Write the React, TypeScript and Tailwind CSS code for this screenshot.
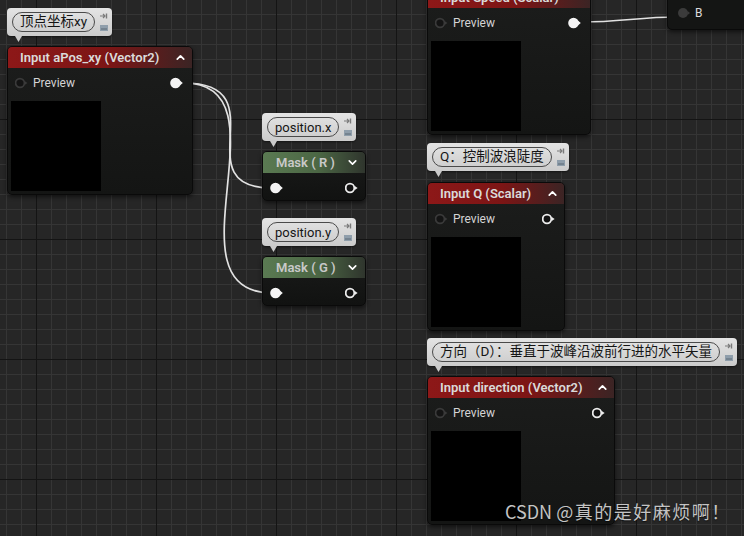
import { ChevronUp, ChevronDown } from "lucide-react";

type PinKind = "dim" | "solid" | "ring" | "gray";

const font = "font-['Roboto','Noto_Sans_CJK_SC',sans-serif]";

function Pin({ kind }: { kind: PinKind }) {
  if (kind === "solid")
    return (
      <svg width="13" height="12" viewBox="0 0 13 12">
        <circle cx="5.5" cy="6" r="5.3" fill="#f4f4f4" />
        <path d="M9.8 3.5 L12.8 6 L9.8 8.5 Z" fill="#f4f4f4" />
      </svg>
    );
  if (kind === "ring")
    return (
      <svg width="13" height="12" viewBox="0 0 13 12">
        <circle cx="5" cy="6" r="4.3" fill="#121212" stroke="#ededed" strokeWidth="1.8" />
        <path d="M9.8 4 L12.6 6 L9.8 8 Z" fill="#ededed" />
      </svg>
    );
  if (kind === "gray")
    return (
      <svg width="13" height="12" viewBox="0 0 13 12">
        <circle cx="5" cy="6" r="5" fill="#3b3b3b" />
        <path d="M9.5 4 L12 6 L9.5 8 Z" fill="#3b3b3b" />
      </svg>
    );
  return (
    <svg width="13" height="12" viewBox="0 0 13 12">
      <circle cx="5" cy="6" r="4.4" fill="#141414" stroke="#3a3a3a" strokeWidth="1.7" />
      <path d="M10 4.3 L12.3 6 L10 7.7 Z" fill="#3a3a3a" />
    </svg>
  );
}

function ParamNode({ pos, title, out }: { pos: string; title: string; out: PinKind }) {
  return (
    <div
      className={`absolute ${pos} h-[149px] flex flex-col rounded-[5px] border border-[#0a0a0a] bg-[linear-gradient(to_bottom,#1c1d1c,#141514)] shadow-[0_2px_4px_rgba(0,0,0,0.55)] overflow-hidden`}
    >
      <div className="h-[21px] shrink-0 flex items-center justify-between pl-[12px] pr-[5px] bg-[linear-gradient(to_right,#8d1818_0%,#7c1515_55%,#3b2424_100%)] text-[13px] font-semibold text-[#dadada]">
        <span>{title}</span>
        <ChevronUp size={13} strokeWidth={3.2} className="text-white" />
      </div>
      <div className="h-[30px] shrink-0 flex items-center justify-between pl-[7px] pr-[9px]">
        <div className="flex items-center gap-[5px]">
          <Pin kind="dim" />
          <span className="text-[12px] text-[#d4d4d4]">Preview</span>
        </div>
        <Pin kind={out} />
      </div>
      <div className="ml-[3px] mt-[3px] w-[90px] h-[90px] bg-black" />
    </div>
  );
}

function MaskNode({ pos, title }: { pos: string; title: string }) {
  return (
    <div
      className={`absolute ${pos} w-[104px] h-[50px] flex flex-col rounded-[5px] border border-[#0a0a0a] bg-[linear-gradient(to_bottom,#1a1b1a,#111211)] shadow-[0_2px_4px_rgba(0,0,0,0.55)] overflow-hidden`}
    >
      <div className="h-[21px] shrink-0 flex items-center justify-between pl-[13px] pr-[6px] bg-[linear-gradient(to_right,#5a7a52_0%,#4b6644_55%,#2f352d_100%)] text-[13px] font-semibold text-[#c9c9c9]">
        <span>{title}</span>
        <ChevronDown size={13} strokeWidth={3} className="text-white" />
      </div>
      <div className="flex-1 flex items-center justify-between pl-[7px] pr-[7px] pt-[2px]">
        <Pin kind="solid" />
        <Pin kind="ring" />
      </div>
    </div>
  );
}

function Comment({ pos, text, size = "text-[13.5px]" }: { pos: string; text: string; size?: string }) {
  return (
    <div
      className={`absolute ${pos} h-[28px] flex items-center pl-[5px] pr-[4px] gap-[5px] rounded-[4px] bg-[linear-gradient(to_bottom,#e4e4e4,#cbcbcb)] shadow-[0_1px_2px_rgba(0,0,0,0.5)]`}
    >
      <div className={`h-[20px] flex items-center rounded-full border border-[#4a4a4a] px-[7px] ${size} leading-none text-[#151515]`}>
        {text}
      </div>
      <div className="flex flex-col items-center gap-[6px]">
        <svg width="8" height="6" viewBox="0 0 8 6">
          <path d="M0 3 H5 M3 1 L5 3 L3 5" stroke="#7a7a7a" strokeWidth="1.2" fill="none" />
          <path d="M6.5 0.5 V5.5" stroke="#7a7a7a" strokeWidth="1.4" />
        </svg>
        <svg width="8" height="6" viewBox="0 0 8 6">
          <rect x="0" y="0" width="8" height="6" fill="#8f9eab" />
          <path d="M1 4 H7" stroke="#5b6974" strokeWidth="1" />
        </svg>
      </div>
      <svg className="absolute left-[8px] top-full" width="7" height="6" viewBox="0 0 7 6">
        <path d="M0 0 H7 L3.5 6 Z" fill="#cbcbcb" />
      </svg>
    </div>
  );
}

export default function App() {
  return (
    <div
      className={`relative w-[744px] h-[536px] overflow-hidden bg-[#262626] ${font} [background-image:linear-gradient(to_right,#141414_1px,transparent_1px),linear-gradient(to_bottom,#141414_1px,transparent_1px),linear-gradient(to_right,#353535_1px,transparent_1px),linear-gradient(to_bottom,#353535_1px,transparent_1px)] [background-size:120px_120px,120px_120px,15px_15px,15px_15px] [background-position:36px_0,0_119px,6px_0,0_14px]`}
    >
      <svg className="absolute inset-0" width="744" height="536">
        <g fill="none" stroke="#e2e2e2" strokeWidth="1.7" strokeLinecap="round">
          <path d="M184 83 C280 83, 182 188, 272 188" />
          <path d="M184 83 C292 83, 162 293, 272 293" />
          <path d="M582 22 C620 22, 640 17, 677 17" />
        </g>
      </svg>

      {/* right-top cut node */}
      <div className="absolute left-[667px] top-[-20px] w-[100px] h-[50px] rounded-[5px] border border-[#0a0a0a] bg-[#141514] shadow-[0_2px_4px_rgba(0,0,0,0.55)] flex items-end pb-[7px] pl-[10px]">
        <div className="flex items-center gap-[4px]">
          <Pin kind="gray" />
          <span className="text-[12px] text-[#dcdcdc]">B</span>
        </div>
      </div>

      <Comment pos="left-[7px] top-[8px]" text="顶点坐标xy" />
      <ParamNode pos="left-[7px] top-[46px] w-[186px]" title="Input aPos_xy (Vector2)" out="solid" />

      <Comment pos="left-[262px] top-[113px]" text="position.x" size="text-[13px]" />
      <MaskNode pos="left-[262px] top-[151px]" title="Mask ( R )" />

      <Comment pos="left-[262px] top-[218px]" text="position.y" size="text-[13px]" />
      <MaskNode pos="left-[262px] top-[256px]" title="Mask ( G )" />

      <ParamNode pos="left-[427px] top-[-14px] w-[164px]" title="Input Speed (Scalar)" out="solid" />

      <Comment pos="left-[427px] top-[143px]" text="Q：控制波浪陡度" />
      <ParamNode pos="left-[427px] top-[182px] w-[138px]" title="Input Q (Scalar)" out="ring" />

      <Comment pos="left-[427px] top-[338px]" text="方向（D）：垂直于波峰沿波前行进的水平矢量" />
      <ParamNode pos="left-[427px] top-[376px] w-[188px]" title="Input direction (Vector2)" out="ring" />

      <div className="absolute left-[505px] top-[498px] text-[18px] text-[#c4c4c4] [text-shadow:0_1px_1px_rgba(0,0,0,0.6)] font-['Noto_Sans_CJK_SC',sans-serif]">
        CSDN <span className="tracking-[1.5px]">@真的是好麻烦啊！</span>
      </div>
    </div>
  );
}
